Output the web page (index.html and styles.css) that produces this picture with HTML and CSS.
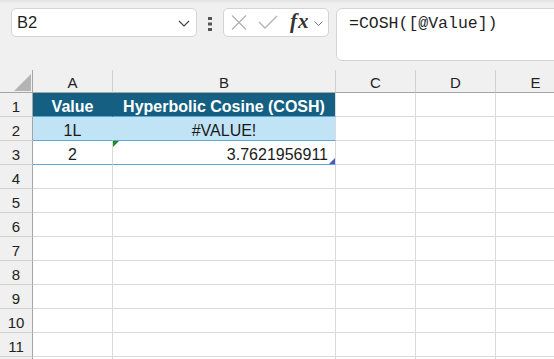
FILE: index.html
```html
<html>
<head>
    <title>COSH sheet</title>
    <meta http-equiv="content-type" content="text/html; charset=UTF-8">
    <link rel="stylesheet" href="styles.css">
</head>
<body>
    <div class="toolbar">
        <div class="namebox">
            <span>B2</span>
            <svg width="12" height="7" viewBox="0 0 12 7"><path d="M1 1 L6 6 L11 1" fill="none" stroke="#444" stroke-width="1.2"/></svg>
        </div>
        <svg class="dots" width="4" height="14" viewBox="0 0 4 14"><rect x="0" y="0" width="4" height="3" fill="#555"/><rect x="0" y="5.5" width="4" height="3" fill="#555"/><rect x="0" y="11" width="4" height="3" fill="#555"/></svg>
        <div class="fxbox">
            <svg class="cancel" width="16" height="15" viewBox="0 0 16 15"><path d="M1 0.5 L15 14.5 M15 0.5 L1 14.5" stroke="#b3b3b3" stroke-width="1.3" fill="none"/></svg>
            <svg class="enter" width="20" height="14" viewBox="0 0 20 14"><path d="M1 7 L7 13 L19 1" stroke="#b3b3b3" stroke-width="1.3" fill="none"/></svg>
            <span class="fx">fx</span>
            <svg class="fxdrop" width="9" height="5" viewBox="0 0 9 5"><path d="M0.5 0.5 L4.5 4.5 L8.5 0.5" fill="none" stroke="#777" stroke-width="1"/></svg>
        </div>
        <div class="formula">=COSH([@Value])</div>
    </div>

    <div class="sheet">
        <div class="corner"><div class="selall"></div></div>
        <div class="colhead">A</div>
        <div class="colhead">B</div>
        <div class="colhead">C</div>
        <div class="colhead">D</div>
        <div class="colhead">E</div>

        <div class="rowhead">1</div>
        <div class="cell t-head">Value</div>
        <div class="cell t-head last">Hyperbolic Cosine (COSH)</div>
        <div class="cell"></div><div class="cell"></div><div class="cell"></div>

        <div class="rowhead">2</div>
        <div class="cell t-band">1L</div>
        <div class="cell t-band last">#VALUE!</div>
        <div class="cell"></div><div class="cell"></div><div class="cell"></div>

        <div class="rowhead">3</div>
        <div class="cell t-row">2</div>
        <div class="cell t-row num flagged">3.7621956911</div>
        <div class="cell"></div><div class="cell"></div><div class="cell"></div>

        <div class="rowhead">4</div>
        <div class="cell"></div><div class="cell"></div><div class="cell"></div><div class="cell"></div><div class="cell"></div>
        <div class="rowhead">5</div>
        <div class="cell"></div><div class="cell"></div><div class="cell"></div><div class="cell"></div><div class="cell"></div>
        <div class="rowhead">6</div>
        <div class="cell"></div><div class="cell"></div><div class="cell"></div><div class="cell"></div><div class="cell"></div>
        <div class="rowhead">7</div>
        <div class="cell"></div><div class="cell"></div><div class="cell"></div><div class="cell"></div><div class="cell"></div>
        <div class="rowhead">8</div>
        <div class="cell"></div><div class="cell"></div><div class="cell"></div><div class="cell"></div><div class="cell"></div>
        <div class="rowhead">9</div>
        <div class="cell"></div><div class="cell"></div><div class="cell"></div><div class="cell"></div><div class="cell"></div>
        <div class="rowhead">10</div>
        <div class="cell"></div><div class="cell"></div><div class="cell"></div><div class="cell"></div><div class="cell"></div>
        <div class="rowhead">11</div>
        <div class="cell"></div><div class="cell"></div><div class="cell"></div><div class="cell"></div><div class="cell"></div>
        <div class="rowhead"></div>
        <div class="cell"></div><div class="cell"></div><div class="cell"></div><div class="cell"></div><div class="cell"></div>
    </div>
</body>
</html>
```

FILE: styles.css
```css
body {
    margin: 0;
    background: #ffffff;
    font-family: 'Liberation Sans', Arial, sans-serif;
    color: #1a1a1a;
    overflow: hidden;
}

.toolbar {
    height: 70px;
    box-sizing: border-box;
    padding: 8px 0 0 11px;
    display: flex;
    align-items: flex-start;
    background: linear-gradient(#e3e3e3, #f0f0f0 4px);
}

.namebox {
    width: 186px;
    height: 29px;
    box-sizing: border-box;
    border: 1px solid #d4d4d4;
    border-radius: 5px;
    background: #fff;
    display: flex;
    align-items: center;
    justify-content: space-between;
    padding: 0 6px 0 5px;
    font-size: 16.5px;
    color: #1f1f1f;
}

.namebox svg {
    margin-top: 1px;
}

.dots {
    margin: 9px 11px 0 11px;
}

.fxbox {
    width: 106px;
    height: 29px;
    box-sizing: border-box;
    border: 1px solid #d4d4d4;
    border-radius: 5px;
    background: #fff;
    display: flex;
    align-items: center;
    padding-left: 7px;
}

.cancel {
    margin-right: 11px;
}

.enter {
    margin-top: -1px;
}

.fx {
    font-family: 'Liberation Serif', 'Times New Roman', serif;
    font-style: italic;
    font-weight: bold;
    font-size: 21px;
    color: #333;
    margin-left: 12px;
    margin-top: -3px;
    letter-spacing: 1px;
}

.fxdrop {
    margin-left: 4px;
    margin-top: 2px;
}

.formula {
    flex: 1;
    height: 53px;
    margin: 0 -10px 0 7px;
    box-sizing: border-box;
    border: 1px solid #d4d4d4;
    border-radius: 6px;
    background: #fff;
    padding: 5px 0 0 12px;
    font-family: 'Liberation Mono', 'Courier New', monospace;
    font-size: 16.5px;
    line-height: 20px;
    color: #1f1f1f;
}

.sheet {
    height: 289px;
    overflow: hidden;
    display: grid;
    grid-template-columns: 33px 80px 223px 80px 80px 80px;
    grid-template-rows: 23px repeat(12, 24px);
    font-size: 15px;
}

.sheet > div {
    box-sizing: border-box;
    border-right: 1px solid #dadada;
    border-bottom: 1px solid #dadada;
    display: flex;
    align-items: flex-end;
    justify-content: center;
    padding-bottom: 1px;
    white-space: nowrap;
}

.sheet > .cell {
    font-size: 16px;
    padding-bottom: 0;
}

.sheet > .corner {
    background: #f0f0f0;
    border-right-color: #a5a5a5;
    border-bottom-color: #a5a5a5;
    justify-content: flex-end;
    padding: 0 1px 1px 0;
}

.selall {
    width: 17px;
    height: 17px;
    background: #b4b4b4;
    clip-path: polygon(100% 0, 100% 100%, 0 100%);
}

.sheet > .colhead {
    background: #f0f0f0;
    border-right-color: #d0d0d0;
    border-bottom-color: #a5a5a5;
    color: #222;
}

.sheet > .rowhead {
    background: #f0f0f0;
    border-right-color: #a5a5a5;
    border-bottom-color: #d0d0d0;
    color: #222;
}

.sheet > .t-head {
    background: #156082;
    color: #fff;
    font-weight: bold;
    border-right-color: #156082;
    border-bottom-color: #5ba9d8;
}

.sheet > .t-band {
    background: #c0e4f5;
    border-right-color: #c0e4f5;
    border-bottom-color: #5ba9d8;
}

.sheet > .t-row {
    border-bottom-color: #5ba9d8;
}

.sheet > .last {
    border-right-color: #dadada;
}

.sheet > .num {
    justify-content: flex-end;
    padding-right: 7px;
    position: relative;
}

.flagged::before {
    content: "";
    position: absolute;
    left: 0;
    top: 0;
    width: 6px;
    height: 6px;
    background: #1e8a1e;
    clip-path: polygon(0 0, 100% 0, 0 100%);
}

.flagged::after {
    content: "";
    position: absolute;
    right: 0;
    bottom: 0;
    width: 6px;
    height: 6px;
    background: #4759c2;
    clip-path: polygon(100% 0, 100% 100%, 0 100%);
}
```
